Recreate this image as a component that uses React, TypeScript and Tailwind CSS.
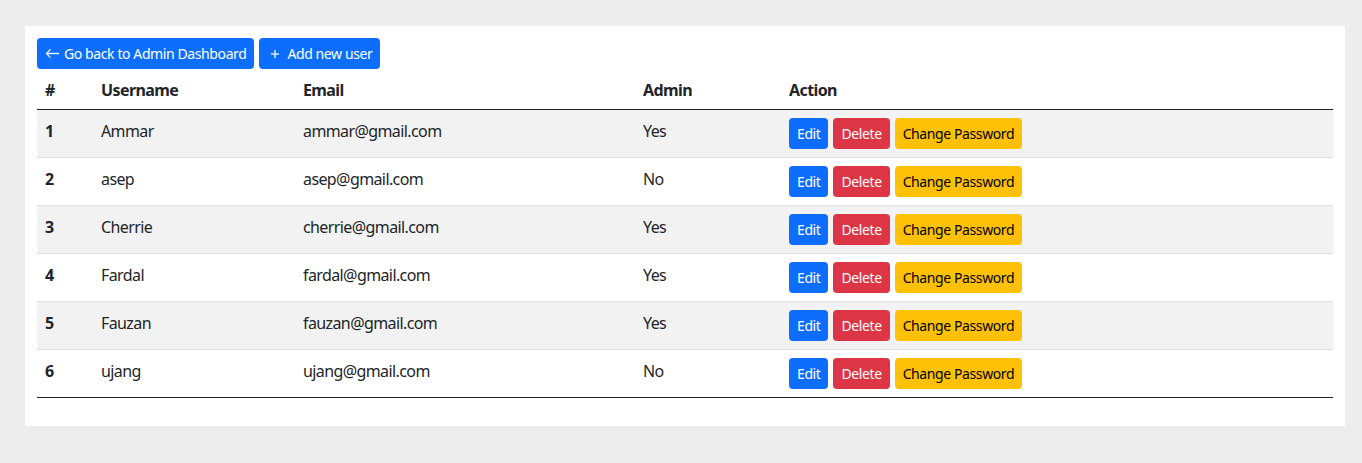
const users = [
  { id: 1, username: "Ammar", email: "ammar@gmail.com", admin: "Yes" },
  { id: 2, username: "asep", email: "asep@gmail.com", admin: "No" },
  { id: 3, username: "Cherrie", email: "cherrie@gmail.com", admin: "Yes" },
  { id: 4, username: "Fardal", email: "fardal@gmail.com", admin: "Yes" },
  { id: 5, username: "Fauzan", email: "fauzan@gmail.com", admin: "Yes" },
  { id: 6, username: "ujang", email: "ujang@gmail.com", admin: "No" },
];

const App = () => {
  return (
    <div
      className="min-h-[463px] bg-[#ededed] pt-[26px] pl-[25px] pr-[17px] text-[#212529]"
      style={{ fontFamily: '"Noto Sans", "Open Sans", sans-serif' }}
    >
      <div className="bg-white p-3 pb-[28px]">
        <div className="flex gap-[5px]">
          <button className="flex items-center gap-[4px] h-[31px] px-2 rounded-[4px] bg-[#0d6efd] text-white text-[14px] tracking-[-0.4px]">
            <svg width="15" height="15" viewBox="0 0 16 16" fill="currentColor" stroke="currentColor" strokeWidth="0.4">
              <path d="M15 8a.5.5 0 0 0-.5-.5H2.707l3.147-3.146a.5.5 0 1 0-.708-.708l-4 4a.5.5 0 0 0 0 .708l4 4a.5.5 0 0 0 .708-.708L2.707 8.5H14.5A.5.5 0 0 0 15 8z" />
            </svg>
            Go back to Admin Dashboard
          </button>
          <button className="flex items-center gap-[4px] h-[31px] px-2 rounded-[4px] bg-[#0d6efd] text-white text-[14px] tracking-[-0.4px]">
            <svg width="16" height="16" viewBox="0 0 16 16" fill="currentColor" stroke="currentColor" strokeWidth="0.3">
              <path d="M8 4a.5.5 0 0 1 .5.5v3h3a.5.5 0 0 1 0 1h-3v3a.5.5 0 0 1-1 0v-3h-3a.5.5 0 0 1 0-1h3v-3A.5.5 0 0 1 8 4z" />
            </svg>
            Add new user
          </button>
        </div>
        <table className="w-full border-collapse text-[16px] leading-6 tracking-[-0.6px]">
          <thead>
            <tr className="border-b border-[#212529] text-left">
              <th className="w-[56px] p-2 pt-[9px] pb-[7px] font-bold">#</th>
              <th className="w-[202px] p-2 pt-[9px] pb-[7px] font-bold">Username</th>
              <th className="w-[340px] p-2 pt-[9px] pb-[7px] font-bold">Email</th>
              <th className="w-[146px] p-2 pt-[9px] pb-[7px] font-bold">Admin</th>
              <th className="p-2 pt-[9px] pb-[7px] font-bold">Action</th>
            </tr>
          </thead>
          <tbody>
            {users.map((u, i) => (
              <tr
                key={u.id}
                className={`${i === users.length - 1 ? "border-b border-[#212529]" : "border-b border-[#dee2e6]"} ${i % 2 === 0 ? "bg-[#f2f2f2]" : "bg-white"}`}
              >
                <td className="p-2 font-bold align-top pt-[9px]">{u.id}</td>
                <td className="p-2 align-top pt-[9px]">{u.username}</td>
                <td className="p-2 align-top pt-[9px]">{u.email}</td>
                <td className="p-2 align-top pt-[9px]">{u.admin}</td>
                <td className="p-2">
                  <div className="flex gap-[5px] text-[14px] tracking-[-0.4px]">
                    <button className="h-[31px] px-2 rounded-[4px] bg-[#0d6efd] text-white">Edit</button>
                    <button className="h-[31px] px-2 rounded-[4px] bg-[#dc3545] text-white">Delete</button>
                    <button className="h-[31px] px-2 rounded-[4px] bg-[#ffc107] text-black">Change Password</button>
                  </div>
                </td>
              </tr>
            ))}
          </tbody>
        </table>
      </div>
    </div>
  );
};

export default App;
